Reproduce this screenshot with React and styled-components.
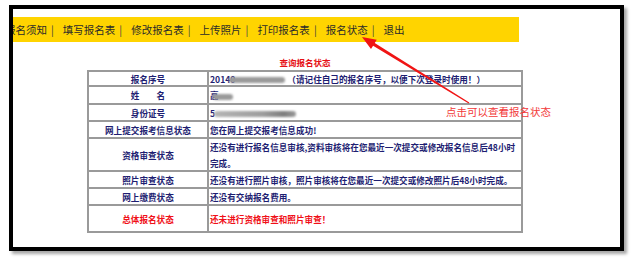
import React from "react";
import styled, {createGlobalStyle} from "styled-components";

const GlobalStyle = createGlobalStyle`
  html, body {
    margin: 0;
    padding: 0;
    background: #ffffff;
  }
  body {
    font-family: "Noto Sans CJK SC", "Liberation Sans", sans-serif;
  }
`;

const navItems = ["报名须知", "填写报名表", "修改报名表", "上传照片", "打印报名表", "报名状态", "退出"];

const rows = [
    {label: "报名序号", h: 15, kind: "serial"},
    {label: "姓　　名", h: 18, kind: "name"},
    {label: "身份证号", h: 17, kind: "id"},
    {label: "网上提交报考信息状态", h: 17, text: "您在网上提交报考信息成功!"},
    {label: "资格审查状态", h: 33, text: "还没有进行报名信息审核,资料审核将在您最近一次提交或修改报名信息后48小时完成。"},
    {label: "照片审查状态", h: 17, text: "还没有进行照片审核，照片审核将在您最近一次提交或修改照片后48小时完成。"},
    {label: "网上缴费状态", h: 17, text: "还没有交纳报名费用。"},
    {label: "总体报名状态", h: 27, text: "还未进行资格审查和照片审查！", red: true},
];

function Value({row}) {
    if (row.kind === "serial") {
        return (
            <span>
                20140<Smudge $w={56} $shift={-6}/>（请记住自己的报名序号，以便下次登录时使用！）
            </span>
        );
    }
    if (row.kind === "name") {
        return <span>高<Smudge $w={20} $shift={-6}/></span>;
    }
    if (row.kind === "id") {
        return <span>5<Smudge $w={82} $shift={-1} $dark/></span>;
    }
    return <span>{row.text}</span>;
}

export default function App() {
    return (
        <Page>
            <GlobalStyle/>
            <Frame>
                <NavBar>
                    <NavList>
                        {navItems.map((item, i) => (
                            <NavItem key={item}>
                                {item}
                                {i < navItems.length - 1 && <Sep>|</Sep>}
                            </NavItem>
                        ))}
                    </NavList>
                </NavBar>
                <Content>
                    <Title>查询报名状态</Title>
                    <Grid style={{gridTemplateRows: rows.map(r => r.h + "px").join(" ")}}>
                        {rows.map(row => (
                            <React.Fragment key={row.label}>
                                <LabelCell $red={row.red}>{row.label}</LabelCell>
                                <ValueCell $red={row.red}><Value row={row}/></ValueCell>
                            </React.Fragment>
                        ))}
                    </Grid>
                </Content>
            </Frame>
            <ArrowSvg width="633" height="258" viewBox="0 0 633 258">
                <polygon
                    fill="#f01414"
                    points="362,37 376.8,39.7 374.7,43 469.3,102.6 468.7,103.4 373.1,45.7 371,49"
                />
            </ArrowSvg>
            <Note>点击可以查看报名状态</Note>
        </Page>
    );
}

const Page = styled.div`
  position: relative;
  width: 633px;
  height: 258px;
  overflow: hidden;
`;

const Frame = styled.div`
  box-sizing: border-box;
  margin: 5px 0 0 9px;
  width: 615px;
  height: 246px;
  border: 4px solid #000;
  background: #fff;
  padding-top: 8px;
  box-shadow: 3px 3px 3px rgba(0, 0, 0, 0.35);
`;

const NavBar = styled.div`
  width: 506px;
  height: 25px;
  background: #ffd400;
  overflow: hidden;
  display: flex;
  align-items: center;
`;

const NavList = styled.div`
  display: flex;
  align-items: center;
  margin-left: -8px;
  white-space: nowrap;
`;

const NavItem = styled.span`
  font-size: 10.5px;
  line-height: 14px;
  color: #2a2a2a;
  display: flex;
  align-items: center;
`;

const Sep = styled.span`
  margin: 0 9px 0 4px;
  color: #444;
`;

const Content = styled.div`
  margin-left: 74px;
  width: 436px;
`;

const Title = styled.div`
  margin: 14px 0 2px;
  height: 12px;
  line-height: 12px;
  text-align: center;
  color: #e60f14;
  font-size: 8.5px;
  font-weight: bold;
`;

const Grid = styled.div`
  display: grid;
  grid-template-columns: 120px 314px;
  border-top: 2px solid #9a9a9a;
  border-left: 2px solid #9a9a9a;
`;

const Cell = styled.div`
  box-sizing: border-box;
  border-right: 2px solid #9a9a9a;
  border-bottom: 2px solid #9a9a9a;
  display: flex;
  align-items: center;
  font-size: 8.6px;
  font-weight: bold;
  line-height: 16px;
  color: ${p => (p.$red ? "#f01018" : "#1e1e72")};
  overflow: hidden;
`;

const LabelCell = styled(Cell)`
  justify-content: center;
  white-space: pre;
`;

const ValueCell = styled(Cell)`
  padding-left: 1px;
`;

const Smudge = styled.span`
  display: inline-block;
  vertical-align: middle;
  width: ${p => p.$w}px;
  height: 6px;
  margin: 0 2px 0 ${p => p.$shift}px;
  border-radius: 4px;
  background: ${p => (p.$dark
    ? "linear-gradient(90deg, #b5b5b5 0%, #9d9d9d 60%, #7e7e7e 85%, #9a9a9a 100%)"
    : "#9a9a9a")};
  filter: blur(1.2px);
`;

const ArrowSvg = styled.svg`
  position: absolute;
  left: 0;
  top: 0;
  pointer-events: none;
`;

const Note = styled.div`
  position: absolute;
  left: 446px;
  top: 105px;
  font-size: 10.5px;
  line-height: 14px;
  color: #f23a3a;
  white-space: nowrap;
`;
